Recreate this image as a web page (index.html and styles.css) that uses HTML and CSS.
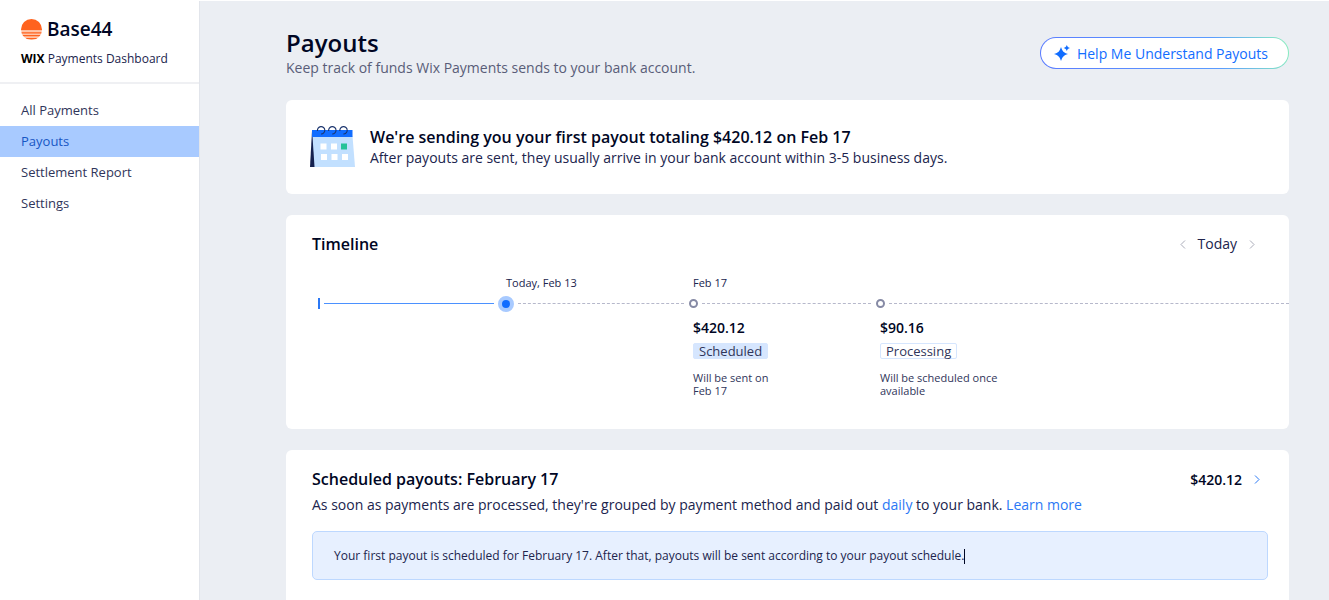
FILE: index.html
```html
<!DOCTYPE html>
<html lang="en">
<head>
<meta charset="utf-8">
<title>Payouts</title>
<link rel="stylesheet" href="styles.css">
</head>
<body>
<div class="app">
  <aside class="sidebar">
    <header class="brand">
      <div class="brand-name">
        <svg class="brand-logo" viewBox="0 0 22 22" aria-hidden="true">
          <defs><clipPath id="disc"><circle cx="11" cy="11" r="11"/></clipPath></defs>
          <g clip-path="url(#disc)">
            <rect width="22" height="12" fill="#ff631f"/>
            <rect y="12" width="22" height="10" fill="#ffc5a8"/>
            <path d="M0 14.500h22M0 17.500h22M0 20.500h22" stroke="#ff631f" stroke-width="1.400"/>
          </g>
        </svg>
        <span>Base44</span>
      </div>
      <div class="brand-sub"><b>WIX</b> Payments Dashboard</div>
    </header>
    <nav class="menu">
      <a class="menu-item" href="#">All Payments</a>
      <a class="menu-item active" href="#">Payouts</a>
      <a class="menu-item" href="#">Settlement Report</a>
      <a class="menu-item" href="#">Settings</a>
    </nav>
  </aside>
  <main class="main">
    <header class="page-head">
      <div>
        <h1>Payouts</h1>
        <p class="subtitle">Keep track of funds Wix Payments sends to your bank account.</p>
      </div>
      <button class="help" type="button">
        <svg width="16" height="16" viewBox="0 0 16 16" fill="#116dff" aria-hidden="true">
          <path d="M7 2C8.500 6.500 9.500 7.500 14 9C9.500 10.500 8.500 11.500 7 16C5.500 11.500 4.500 10.500 0 9C4.500 7.500 5.500 6.500 7 2Z"/>
          <path d="M12.800 0C13.700 2 13.900 2.200 16 3C13.900 3.800 13.700 4 12.800 6C11.900 4 11.700 3.800 9.600 3C11.700 2.200 11.900 2 12.800 0Z"/>
        </svg>
        Help Me Understand Payouts
      </button>
    </header>

    <section class="card summary">
      <svg class="calendar" viewBox="0 0 46 42" aria-hidden="true">
        <path d="M2 5L7 10L5 41H0Z" fill="#14214f"/>
        <path d="M2.500 10H42.500L45 41H4.500Z" fill="#c2e0ff"/>
        <path d="M2 4H42.500V11H2Z" fill="#116dff"/>
        <path d="M10.500 17.500h6v6h-6zM21 17.500h6v6h-6zM11 28h6v6h-6zM21.500 28h6v6h-6zM32 28h6v6h-6z" fill="#fff"/>
        <path d="M31 17.500h6v6h-6z" fill="#25c299"/>
        <g fill="none" stroke="#1c356e" stroke-width="1.100">
          <path d="M7.500 5A3.700 3.700 0 1 1 11 8"/>
          <path d="M18.700 5A3.700 3.700 0 1 1 22.200 8"/>
          <path d="M29.900 5A3.700 3.700 0 1 1 33.400 8"/>
        </g>
      </svg>
      <div>
        <h2>We're sending you your first payout totaling $420.12 on Feb 17</h2>
        <p class="body-text">After payouts are sent, they usually arrive in your bank account within 3-5 business days.</p>
      </div>
    </section>

    <section class="card timeline-card">
      <header class="card-head">
        <h2>Timeline</h2>
        <div class="pager">
          <button type="button" class="icon-btn" aria-label="Previous"><svg class="chevron" width="6" height="9" viewBox="0 0 6 9"><path d="M5 .5L1 4.500L5 8.500"/></svg></button>
          <button type="button" class="today">Today</button>
          <button type="button" class="icon-btn" aria-label="Next"><svg class="chevron" width="6" height="9" viewBox="0 0 6 9"><path d="M1 .5L5 4.500L1 8.500"/></svg></button>
        </div>
      </header>
      <ol class="timeline">
        <li class="step">
          <div class="date"></div>
          <div class="rail"><span class="start"></span><span class="line past"></span></div>
        </li>
        <li class="step">
          <div class="date">Today, Feb 13</div>
          <div class="rail"><span class="now"></span><span class="line"></span></div>
        </li>
        <li class="step">
          <div class="date">Feb 17</div>
          <div class="rail"><span class="dot"></span><span class="line"></span></div>
          <div class="amount">$420.12</div>
          <span class="badge scheduled">Scheduled</span>
          <p class="note">Will be sent on<br>Feb 17</p>
        </li>
        <li class="step">
          <div class="date"></div>
          <div class="rail"><span class="dot"></span><span class="line last"></span></div>
          <div class="amount">$90.16</div>
          <span class="badge processing">Processing</span>
          <p class="note">Will be scheduled once<br>available</p>
        </li>
      </ol>
    </section>

    <section class="card scheduled-card">
      <header class="card-head">
        <h2>Scheduled payouts: February 17</h2>
        <a class="total" href="#">$420.12
          <svg class="chevron" width="6" height="9" viewBox="0 0 6 9" aria-hidden="true"><path d="M1 .5L5 4.500L1 8.500"/></svg>
        </a>
      </header>
      <p class="body-text">As soon as payments are processed, they're grouped by payment method and paid out <a href="#">daily</a> to your bank. <a href="#">Learn more</a></p>
      <div class="notice">Your first payout is scheduled for February 17. After that, payouts will be sent according to your payout schedule.<span class="caret"></span></div>
    </section>
  </main>
</div>
</body>
</html>
```
FILE: styles.css
```css
* { box-sizing: border-box; }
body {
  margin: 0;
  font-family: "Open Sans", "Noto Sans", sans-serif;
  font-size: 14px;
  color: #20244d;
  background: #ebeef3;
}
h1, h2, p, ol { margin: 0; padding: 0; }
h1, h2, .amount, .total, .brand-name { color: #000624; font-weight: 600; }
h1 { font-size: 24px; line-height: 30px; }
h2 { font-size: 16px; line-height: 22px; }
a { color: #2b78f5; text-decoration: none; }
button { font: inherit; border: 0; background: none; padding: 0; cursor: pointer; }

.app { display: flex; min-height: 100vh; border-top: 1px solid #fff; }

.sidebar {
  flex: 0 0 200px;
  min-width: 0;
  background: #fff;
  border-right: 1px solid #e2e5eb;
}
.brand { padding: 16px 20px 14px 21px; border-bottom: 2px solid #eff0f3; white-space: nowrap; }
.brand-name { display: flex; align-items: center; gap: 5px; font-size: 19px; line-height: 24px; }
.brand-logo { width: 21px; height: 21px; }
.brand-sub { margin-top: 9px; font-size: 12px; line-height: 18px; color: #20244d; }
.brand-sub b { color: #000; font-weight: 700; }
.menu { padding-top: 11px; }
.menu-item { display: block; padding: 0 21px; font-size: 13px; line-height: 31px; color: #30355a; }
.menu-item.active { background: #a8caff; color: #1656c4; }

.main { flex: 1; min-width: 0; padding: 27px 40px 0 86px; }
.page-head { display: flex; justify-content: space-between; align-items: flex-start; margin-bottom: 22px; }
.subtitle { font-size: 14px; line-height: 20px; color: #595d78; }
.help {
  display: flex;
  align-items: center;
  gap: 7px;
  height: 32px;
  margin-top: 9px;
  padding: 0 20px 0 13px;
  border: 1px solid transparent;
  border-radius: 16px;
  background:
    linear-gradient(#fff, #fff) padding-box,
    linear-gradient(75deg, #5a7bff, #5a9cff 70%, #8cf0bd) border-box;
  color: #116dff;
  font-weight: 500;
}

.card { background: #fff; border-radius: 6px; margin-bottom: 21px; }
.summary { display: flex; align-items: center; gap: 14px; padding: 26px 24px; }
.calendar { width: 46px; height: 42px; }
.body-text { font-size: 14px; line-height: 20px; }

.card-head { display: flex; justify-content: space-between; align-items: center; }
.icon-btn { display: flex; padding: 4px; }
.chevron { fill: none; stroke: #a9abb8; }
.total .chevron { stroke: #2b78f5; }

.timeline-card { padding: 18px 0 32px; overflow: hidden; }
.timeline-card .card-head { padding: 0 30px 0 26px; }
.pager { display: flex; align-items: center; gap: 8px; }
.today { color: #20244d; line-height: 22px; }
.timeline {
  display: grid;
  grid-template-columns: repeat(3, minmax(120px, 187px)) 1fr;
  padding: 20px 0 0 33px;
  list-style: none;
}
.date { height: 16px; font-size: 11px; line-height: 16px; color: #20244d; font-weight: 500; }
.rail { display: flex; align-items: center; height: 25px; }
.start { width: 2px; height: 11px; margin-left: -1px; background: #2b78f5; }
.now { width: 16px; height: 16px; margin-left: -8px; border: 4px solid #a8caff; border-radius: 50%; background: #116dff; }
.dot { width: 9px; height: 9px; margin-left: -4px; border: 2px solid #868aa5; border-radius: 50%; }
.line { flex: 1; margin: 0 9px 0 4px; border-top: 1px dashed #b6b8cb; }
.line.past { margin-right: 12px; border-top: 1px solid #4b91ff; }
.line.last { margin-right: 0; }
.amount { font-size: 14px; line-height: 24px; }
.badge { display: block; width: fit-content; margin-top: 3px; padding: 0 5px; border: 1px solid #d6e6fe; border-radius: 2px; font-size: 13px; line-height: 14px; color: #30355a; }
.badge.scheduled { background: #d6e6fe; }
.note { margin-top: 12px; font-size: 11px; line-height: 13px; color: #30355a; }

.scheduled-card { padding: 18px 21px 20px 26px; margin-bottom: 0; border-radius: 6px 6px 0 0; }
.scheduled-card .card-head { padding-right: 8px; }
.scheduled-card .body-text { margin-top: 5px; }
.total { display: flex; align-items: center; gap: 12px; }
.notice {
  margin-top: 16px;
  padding: 14px 21px;
  border: 1px solid #bdd8ff;
  border-radius: 5px;
  background: #e7f0ff;
  font-size: 12px;
  line-height: 19px;
}
.caret { display: inline-block; width: 1px; height: 15px; background: #000624; vertical-align: middle; }
```
